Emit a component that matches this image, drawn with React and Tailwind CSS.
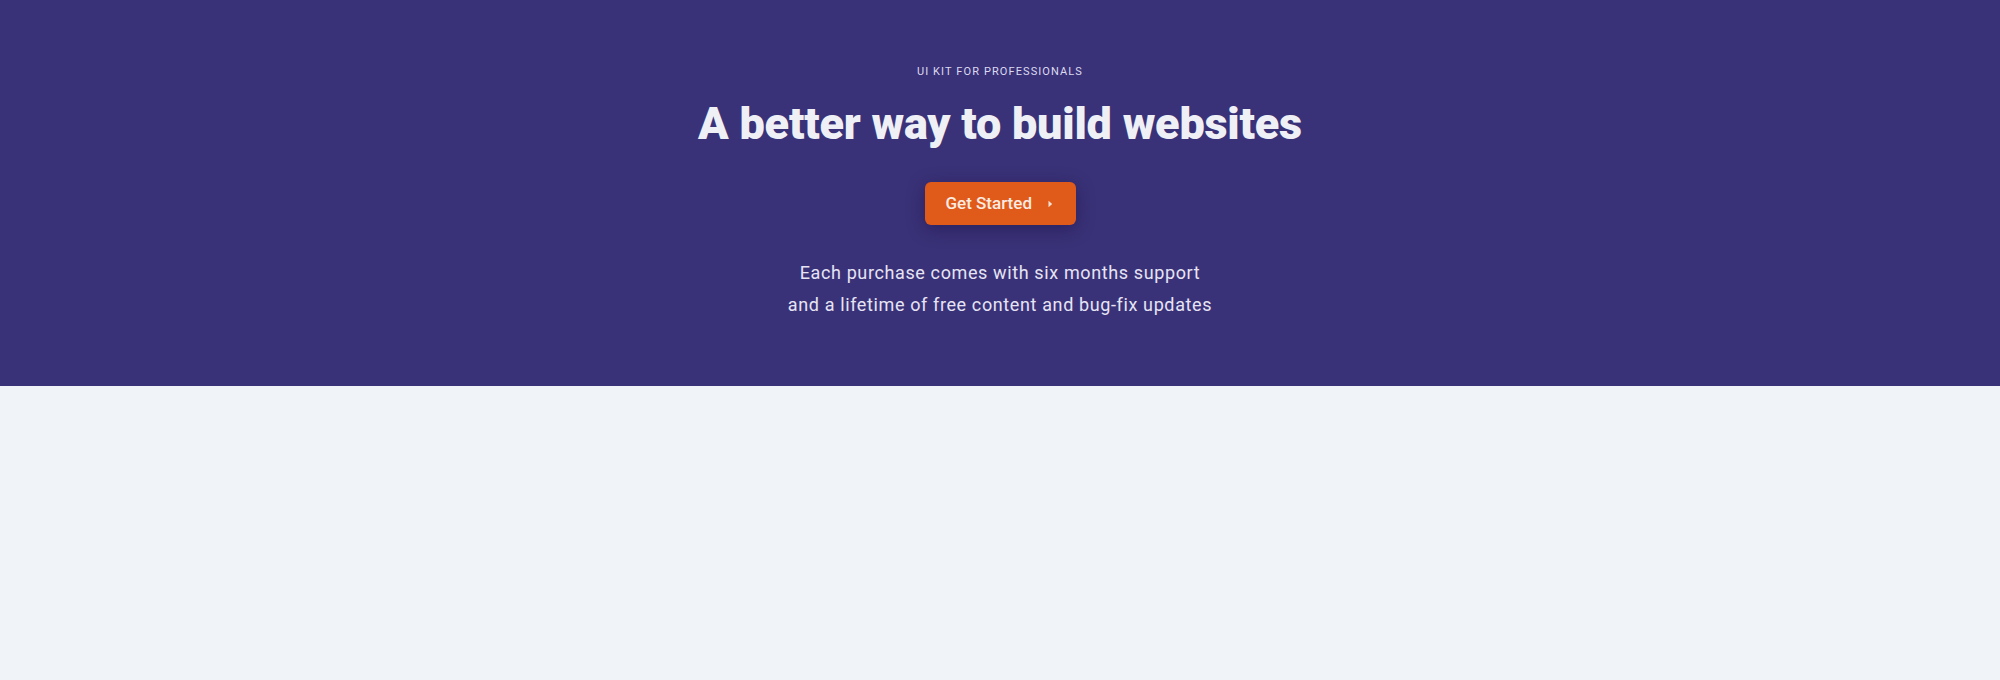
export default function App() {
  return (
    <div className="min-h-[680px] bg-[#f0f4f8]" style={{ fontFamily: "Roboto, 'Liberation Sans', sans-serif" }}>
      <section className="bg-[#3a3278] flex flex-col items-center pt-[64px] pb-[65px]">
        <p className="text-[11px] leading-4 tracking-[0.1em] text-[#dcdaf0] uppercase">UI Kit for Professionals</p>
        <h1 className="mt-[16px] text-[45px] leading-[56px] font-black tracking-[-0.005em] text-[#eef0f6]">A better way to build websites</h1>
        <button className="mt-[30px] h-[43px] w-[151px] rounded-md bg-[#e05a1a] flex items-center pl-[21px] gap-[16px] text-[#fcece2] text-[17px] font-medium shadow-[0_4px_18px_rgba(20,10,60,0.45)]">
          <span>Get Started</span>
          <svg width="5" height="8" viewBox="0 0 5 8" className="mt-[1px]">
            <path d="M0.5 0.8 L4.2 4 L0.5 7.2 Z" fill="#f7e2d4" />
          </svg>
        </button>
        <div className="mt-[32px] text-[18px] leading-8 tracking-[0.62px] text-[#e6e4f4] text-center">
          <p>Each purchase comes with six months support</p>
          <p>and a lifetime of free content and bug-fix updates</p>
        </div>
      </section>
    </div>
  );
}
